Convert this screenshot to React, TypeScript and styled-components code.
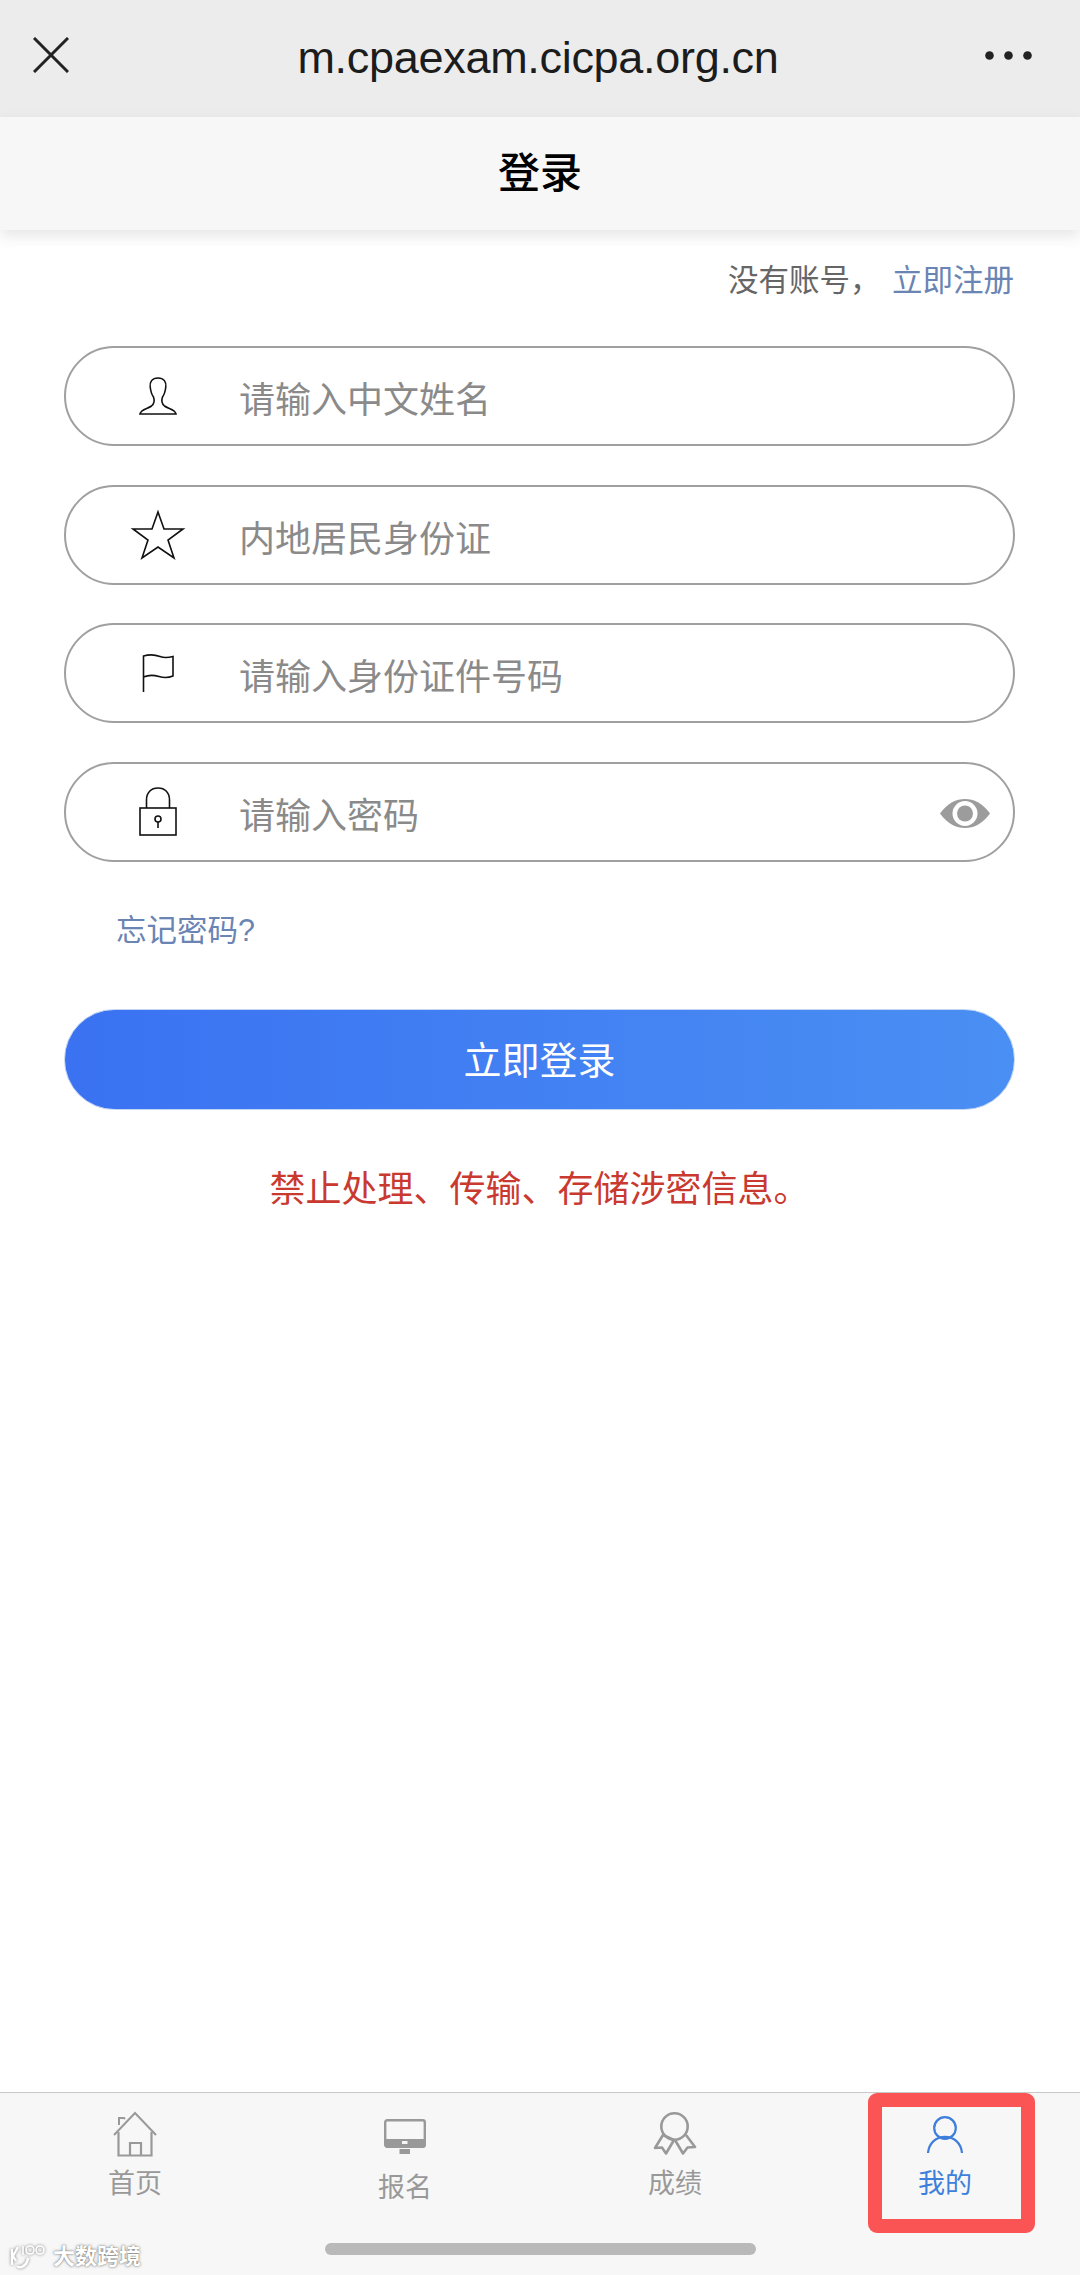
import React from "react";
import styled, { createGlobalStyle } from "styled-components";

const CJK = '"Liberation Sans", "Noto Sans CJK SC", sans-serif';

const Global = createGlobalStyle`
  html, body { margin: 0; padding: 0; background: #fff; }
  * { box-sizing: border-box; }
  body { font-family: ${CJK}; }
`;

const Page = styled.div`
  width: 1080px;
  height: 2275px;
  display: flex;
  flex-direction: column;
  overflow: hidden;
  background: #fff;
`;

const BrowserBar = styled.div`
  height: 117px;
  flex: none;
  background: #ececec;
  display: flex;
  align-items: center;
  justify-content: space-between;
  padding: 0 48px 0 33px;
`;

const CloseIcon = styled.svg`
  width: 36px;
  height: 36px;
  display: block;
  margin-top: -8px;
`;

const Url = styled.div`
  font-size: 45px;
  color: #1c1c1c;
  letter-spacing: -0.3px;
  margin: -2px 0 0 22px;
`;

const Dots = styled.svg`
  width: 47px;
  height: 9px;
  display: block;
  margin-top: -7px;
`;

const TitleBar = styled.header`
  height: 113px;
  flex: none;
  background: #f7f7f7;
  display: flex;
  align-items: center;
  justify-content: center;
  padding-bottom: 9px;
  box-shadow: 0 6px 14px rgba(0, 0, 0, 0.1);
  position: relative;
`;

const Title = styled.h1`
  margin: 0;
  font-size: 42px;
  font-weight: 500;
  color: #000;
`;

const Main = styled.main`
  flex: 1;
  padding: 30px 65px 0 64px;
  display: flex;
  flex-direction: column;
`;

const RegisterLine = styled.div`
  height: 40px;
  line-height: 40px;
  text-align: right;
  font-size: 30.5px;
  color: #666;
  white-space: pre;
  padding-right: 1px;
`;

const RegisterPrompt = styled.span`
  margin-right: 3px;
`;

const LinkText = styled.a`
  color: #6a84b3;
  text-decoration: none;
`;

const Form = styled.form`
  margin-top: 46px;
  display: flex;
  flex-direction: column;
  gap: 38.67px;
`;

const Field = styled.label`
  height: 100px;
  border: 2px solid #a0a0a0;
  border-radius: 50px;
  display: flex;
  align-items: center;
  padding: 0 23px 0 46px;
`;

const FieldIcon = styled.span`
  width: 90px;
  flex: none;
  display: flex;
  justify-content: center;
  align-items: center;
`;

const IconSvg = styled.svg`
  display: block;
  fill: none;
  stroke: #111;
  stroke-width: 1.6;
  overflow: visible;
  margin-left: 1px;
`;

const FieldInput = styled.input`
  flex: 1;
  min-width: 0;
  margin-left: 37px;
  padding: 10px 0 0;
  border: 0;
  outline: 0;
  background: transparent;
  font-family: ${CJK};
  font-size: 36px;
  color: #333;
  &::placeholder {
    color: #8a8a8a;
    opacity: 1;
  }
`;

const EyeIcon = styled.svg`
  width: 50px;
  height: 29px;
  flex: none;
  display: block;
  margin-top: 4px;
`;

const Forgot = styled(LinkText)`
  margin: 48px 0 0 52px;
  height: 40px;
  line-height: 40px;
  font-size: 30.5px;
  display: block;
`;

const LoginButton = styled.button`
  margin-top: 59px;
  height: 101px;
  border: 1px solid #c3d5f3;
  border-radius: 51px;
  background: linear-gradient(90deg, #3a72f2 0%, #4a8ff3 100%);
  color: #fff;
  font-family: ${CJK};
  font-size: 38px;
  padding: 0 0 4px;
`;

const Notice = styled.p`
  margin: 55px 0 0;
  height: 50px;
  line-height: 50px;
  text-align: center;
  font-size: 36px;
  color: #c9392f;
`;

const TabBar = styled.nav`
  height: 183px;
  flex: none;
  background: #f7f7f7;
  border-top: 1px solid #c8c8c8;
  position: relative;
  display: flex;
  flex-direction: column;
`;

const Tabs = styled.div`
  height: 150px;
  flex: none;
  display: grid;
  grid-template-columns: repeat(4, 1fr);
`;

const Tab = styled.a<{ $pad: number; $active?: boolean }>`
  position: relative;
  display: flex;
  flex-direction: column;
  align-items: center;
  padding-top: ${(p) => p.$pad}px;
  color: ${(p) => (p.$active ? "#3f7fdc" : "#999")};
`;

const TabLabel = styled.span<{ $gap: number }>`
  margin-top: ${(p) => p.$gap}px;
  height: 30px;
  line-height: 30px;
  font-size: 27px;
`;

const TabSvg = styled.svg`
  display: block;
  fill: none;
  stroke: currentColor;
  overflow: visible;
`;

const Highlight = styled.span`
  position: absolute;
  left: 58px;
  top: 0;
  width: 167px;
  height: 140px;
  border: 14px solid #fb5454;
  border-radius: 9px;
`;

const HomeIndicator = styled.div`
  width: 431px;
  height: 12px;
  margin: 0 auto;
  border-radius: 6px;
  background: #b9b9b9;
`;

const Watermark = styled.div`
  position: absolute;
  left: 9px;
  bottom: 5px;
  display: flex;
  align-items: center;
  gap: 6px;
  color: #fff;
  font-size: 22px;
  font-weight: 700;
  line-height: 26px;
  text-shadow: 0 0 3px rgba(0, 0, 0, 0.5), 0 0 1px rgba(0, 0, 0, 0.35);
`;

const WatermarkLogo = styled.svg`
  width: 38px;
  height: 27px;
  display: block;
  fill: none;
  stroke: #fff;
  stroke-width: 2.4;
  filter: drop-shadow(0 0 1.5px rgba(0, 0, 0, 0.5));
`;

export default function App() {
  return (
    <Page>
      <Global />
      <BrowserBar>
        <CloseIcon viewBox="0 0 36 36">
          <path d="M1 1 L35 35 M35 1 L1 35" stroke="#222" strokeWidth="3" fill="none" />
        </CloseIcon>
        <Url>m.cpaexam.cicpa.org.cn</Url>
        <Dots viewBox="0 0 47 9">
          <circle cx="4.5" cy="4.5" r="4.3" fill="#222" />
          <circle cx="23.5" cy="4.5" r="4.3" fill="#222" />
          <circle cx="42.5" cy="4.5" r="4.3" fill="#222" />
        </Dots>
      </BrowserBar>
      <TitleBar>
        <Title>登录</Title>
      </TitleBar>
      <Main>
        <RegisterLine>
          <RegisterPrompt>没有账号， </RegisterPrompt>
          <LinkText>立即注册</LinkText>
        </RegisterLine>
        <Form>
          <Field>
            <FieldIcon>
              <IconSvg width="38" height="38" viewBox="0 0 38 38">
                <path d="M19 1 C13 1 10.5 5 11.2 10 C11.8 15 13 18 14.5 20 C15.5 23 15 27 12.5 29 C8.5 32 2 32 1 37 H37 C36 32 29.5 32 25.5 29 C23 27 22.5 23 23.5 20 C25 18 26.2 15 26.8 10 C27.5 5 25 1 19 1 Z" />
              </IconSvg>
            </FieldIcon>
            <FieldInput placeholder="请输入中文姓名" />
          </Field>
          <Field>
            <FieldIcon>
              <IconSvg width="52" height="48" viewBox="0 0 52 48">
                <polygon points="26,1 32,18 51,18 36,29 42,47 26,36 10,47 16,29 1,18 20,18" />
              </IconSvg>
            </FieldIcon>
            <FieldInput placeholder="内地居民身份证" />
          </Field>
          <Field>
            <FieldIcon>
              <IconSvg width="32" height="38" viewBox="0 0 32 38">
                <path d="M1.5 38 V2 C8 0 14 1 18 2.5 C22 4 27 3.5 31 2.5 V22 C26 24 22 24 17 22.5 C12 21 6 21 1.5 23" />
              </IconSvg>
            </FieldIcon>
            <FieldInput placeholder="请输入身份证件号码" />
          </Field>
          <Field>
            <FieldIcon>
              <IconSvg width="38" height="49" viewBox="0 0 38 49">
                <rect x="1" y="21" width="36" height="27" />
                <path d="M7.5 21 V13 C7.5 5.5 12 1 19 1 C26 1 30.5 5.5 30.5 13 V21" />
                <circle cx="19" cy="32" r="3" />
                <path d="M19 35 V41" />
              </IconSvg>
            </FieldIcon>
            <FieldInput type="text" placeholder="请输入密码" />
            <EyeIcon viewBox="0 0 50 29">
              <path d="M0 14.5 C8 4 16 0 25 0 C34 0 42 4 50 14.5 C42 25 34 29 25 29 C16 29 8 25 0 14.5 Z" fill="#9c9c9c" />
              <circle cx="25" cy="14.5" r="12.5" fill="#fff" />
              <circle cx="25" cy="14.5" r="8" fill="#9c9c9c" />
            </EyeIcon>
          </Field>
        </Form>
        <Forgot>忘记密码?</Forgot>
        <LoginButton type="button">立即登录</LoginButton>
        <Notice>禁止处理、传输、存储涉密信息。</Notice>
      </Main>
      <TabBar>
        <Tabs>
          <Tab $pad={19}>
            <TabSvg width="44" height="44" viewBox="0 0 44 44" strokeWidth="2">
              <path d="M1 23 L22 1 L43 23" />
              <path d="M5.5 20 V43.5 H38.5 V20" strokeWidth="2.2" />
              <path d="M6 13 V6 H11 L12 7" />
              <path d="M17 43.5 V31 H28 V43.5" strokeWidth="2.2" />
            </TabSvg>
            <TabLabel $gap={13}>首页</TabLabel>
          </Tab>
          <Tab $pad={26}>
            <TabSvg width="42" height="35" viewBox="0 0 42 35" strokeWidth="2.4">
              <rect x="1.2" y="1.2" width="39.6" height="26.6" rx="2" />
              <path d="M1 20 H41 V26 Q41 29 38 29 H4 Q1 29 1 26 Z" fill="currentColor" stroke="none" />
              <rect x="18" y="22" width="5.5" height="3" fill="#f7f7f7" stroke="none" />
              <rect x="15.5" y="30" width="10.5" height="5" fill="currentColor" stroke="none" />
            </TabSvg>
            <TabLabel $gap={19}>报名</TabLabel>
          </Tab>
          <Tab $pad={19}>
            <TabSvg width="42" height="42" viewBox="0 0 42 42" strokeWidth="2.6">
              <circle cx="20.5" cy="14.5" r="13.2" />
              <path d="M9 23 L1 36 L8 35.5 L12 41.5 L20 28 Z" strokeLinejoin="round" />
              <path d="M21 28 L29 41.5 L33.5 35.5 L41 35 L32 23" strokeLinejoin="round" />
            </TabSvg>
            <TabLabel $gap={15}>成绩</TabLabel>
          </Tab>
          <Tab $pad={23} $active>
            <TabSvg width="36" height="37" viewBox="0 0 36 37" strokeWidth="2.2">
              <circle cx="18" cy="12" r="10.8" />
              <path d="M1 37 C2 27 9 20.8 18 20.8 C27 20.8 34 27 35 37" />
            </TabSvg>
            <TabLabel $gap={16}>我的</TabLabel>
            <Highlight />
          </Tab>
        </Tabs>
        <HomeIndicator />
        <Watermark>
          <WatermarkLogo viewBox="0 0 38 27">
            <path d="M3 6 V22 M9 4 L4 13 L7 18" />
            <path d="M19 15 C18 23 11 26 8 23" />
            <path d="M14 3 V12" strokeWidth="1.6" />
            <circle cx="21" cy="7" r="4" strokeWidth="1.6" />
            <circle cx="31" cy="7" r="4" strokeWidth="1.6" />
          </WatermarkLogo>
          <span>大数跨境</span>
        </Watermark>
      </TabBar>
    </Page>
  );
}
